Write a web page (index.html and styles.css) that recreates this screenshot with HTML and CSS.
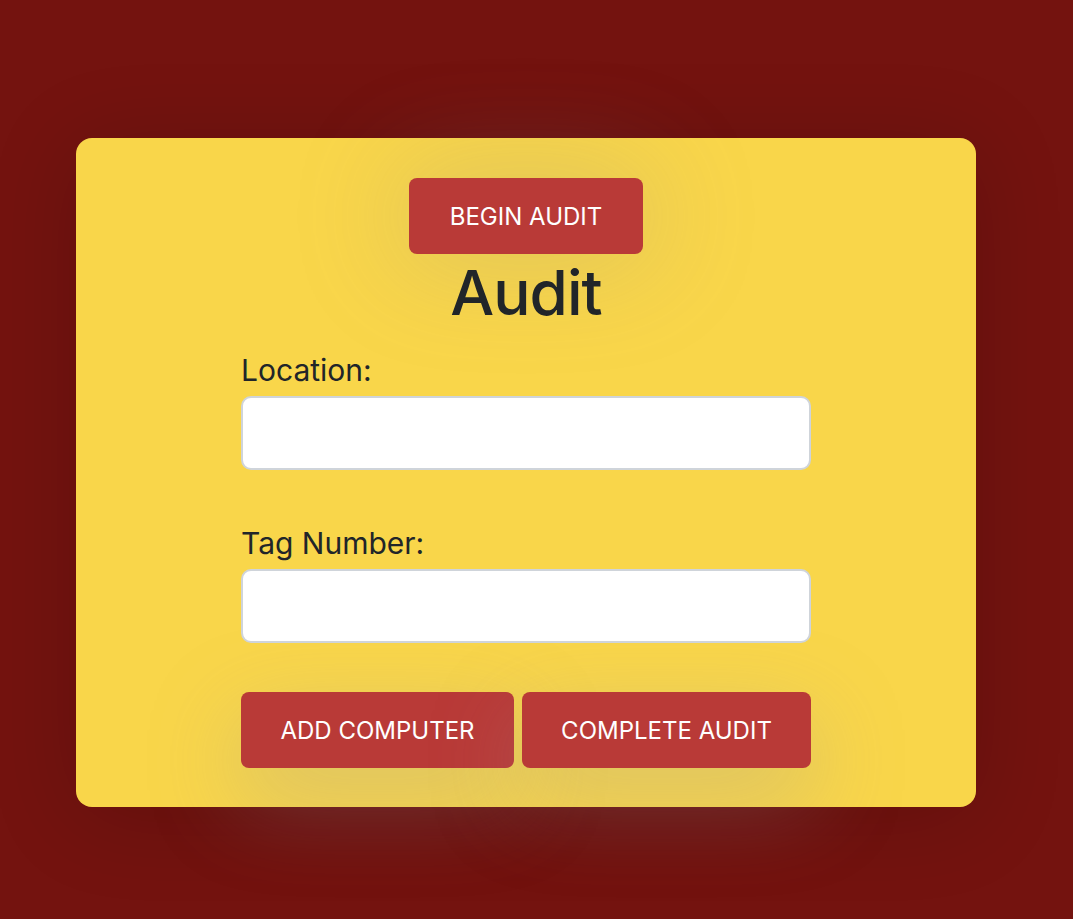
FILE: index.html
```
<!DOCTYPE html>
<html lang="en">
<head>
<meta charset="utf-8">
<title>Audit</title>
<link rel="stylesheet" href="styles.css">
</head>
<body>
<div class="page">
  <div class="card">
    <button class="btn btn-begin" type="button">BEGIN AUDIT</button>
    <h1 class="title">Audit</h1>
    <form class="form">
      <label class="label" for="loc">Location:</label>
      <input class="field" id="loc" type="text">
      <label class="label label-second" for="tag">Tag Number:</label>
      <input class="field" id="tag" type="text">
      <div class="actions">
        <button class="btn btn-add" type="button">ADD COMPUTER</button>
        <button class="btn btn-complete" type="button">COMPLETE AUDIT</button>
      </div>
    </form>
  </div>
</div>
</body>
</html>
```
FILE: styles.css
```
* { box-sizing: border-box; }
html, body { margin: 0; }
body {
  min-height: 100vh;
  background: #74130f;
  font-family: Inter, "Noto Sans", "Liberation Sans", sans-serif;
  color: #212529;
}
.page {
  padding: 138px 0 0 76px;
}
.card {
  width: 900px;
  background: #f9d64a;
  border-radius: 16px;
  padding: 40px 0 39px;
  display: flex;
  flex-direction: column;
  align-items: center;
  box-shadow: 0 10px 90px rgba(0, 0, 0, 0.16);
}
.btn {
  height: 76px;
  padding: 0 41px;
  border: none;
  border-radius: 8px;
  background: #b93a37;
  color: #ffffff;
  font-family: Inter, "Noto Sans", "Liberation Sans", sans-serif;
  font-size: 24px;
  font-weight: 400;
}
.btn-begin {
  box-shadow: 0 0 110px 10px rgba(130, 130, 150, 0.22);
}
.title {
  margin: 0;
  font-size: 62px;
  line-height: 77px;
  font-weight: 500;
  letter-spacing: -1px;
}
.form {
  width: 570px;
  margin-top: 21px;
  display: flex;
  flex-direction: column;
}
.label {
  font-size: 30px;
  line-height: 36px;
}
.label-second {
  margin-top: 55px;
}
.field {
  position: relative;
  z-index: 1;
  margin-top: 8px;
  height: 74px;
  width: 100%;
  border: 2px solid #cfd4da;
  border-radius: 10px;
  background: #ffffff;
  font-size: 24px;
}
.actions {
  margin-top: 49px;
  display: flex;
  gap: 8px;
}
.btn-add,
.btn-complete {
  padding: 0;
  box-shadow: 0 30px 90px 0 rgba(150, 150, 165, 0.34);
}
.btn-add { width: 273px; }
.btn-complete { width: 289px; }
```
